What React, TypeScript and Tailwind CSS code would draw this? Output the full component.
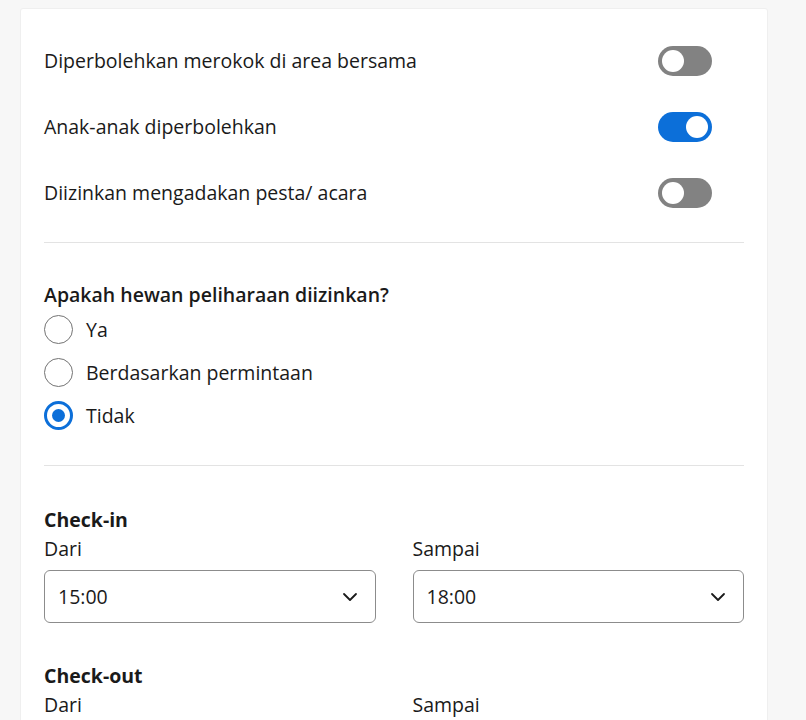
import { useState } from 'react';

function Toggle({ on, onClick }: { on: boolean; onClick: () => void }) {
  return (
    <button
      onClick={onClick}
      className={`relative w-[54px] h-[30px] rounded-full shrink-0 ${on ? 'bg-[#0c6fd9]' : 'bg-[#828282]'}`}
    >
      <span
        className={`absolute top-[4px] w-[22px] h-[22px] rounded-full bg-white ${on ? 'left-[28px]' : 'left-[4px]'}`}
      />
    </button>
  );
}

function Radio({ checked, label, onClick }: { checked: boolean; label: string; onClick: () => void }) {
  return (
    <button onClick={onClick} className="flex items-center h-[43px] gap-[13px] text-left">
      {checked ? (
        <span className="w-[29px] h-[29px] rounded-full border-[3px] border-[#0c6fd9] flex items-center justify-center">
          <span className="w-[13px] h-[13px] rounded-full bg-[#0c6fd9]" />
        </span>
      ) : (
        <span className="w-[29px] h-[29px] rounded-full border-[1.5px] border-[#737373]" />
      )}
      <span>{label}</span>
    </button>
  );
}

function TimeSelect({ value }: { value: string }) {
  return (
    <div className="flex items-center justify-between h-[53px] border border-[#8c8c8c] rounded-[6px] pl-[13px] pr-[16px]">
      <span>{value}</span>
      <svg width="18" height="18" viewBox="0 0 24 24" fill="none" stroke="#1a1a1a" strokeWidth="2.4" strokeLinecap="round" strokeLinejoin="round">
        <path d="M4 8l8 8 8-8" />
      </svg>
    </div>
  );
}

export default function App() {
  const [rules, setRules] = useState([false, true, false]);
  const [pet, setPet] = useState(2);

  const ruleLabels = [
    'Diperbolehkan merokok di area bersama',
    'Anak-anak diperbolehkan',
    'Diizinkan mengadakan pesta/ acara',
  ];
  const petLabels = ['Ya', 'Berdasarkan permintaan', 'Tidak'];

  return (
    <div className="min-h-screen bg-[#f7f7f7] pt-[8px] text-[#1a1a1a] text-[19.5px] leading-[26px] font-['Open_Sans',sans-serif]">
      <div className="ml-[20px] w-[748px] bg-white border border-[#efefef] rounded-[3px] px-[23px] pt-[19px] pb-[20px]">
        <div className="flex flex-col">
          {ruleLabels.map((l, i) => (
            <div key={l} className="flex items-center justify-between h-[66px] pr-[32px]">
              <span>{l}</span>
              <Toggle on={rules[i]} onClick={() => setRules((r) => r.map((v, j) => (j === i ? !v : v)))} />
            </div>
          ))}
        </div>
        <div className="mt-[16px] border-t border-[#e3e3e3]" />

        <div className="pt-[39px]">
          <p className="font-semibold">Apakah hewan peliharaan diizinkan?</p>
          <div className="flex flex-col">
            {petLabels.map((l, i) => (
              <Radio key={l} label={l} checked={pet === i} onClick={() => setPet(i)} />
            ))}
          </div>
        </div>
        <div className="mt-[28px] border-t border-[#e3e3e3]" />

        <div className="pt-[41px]">
          <p className="font-bold">Check-in</p>
          <div className="grid grid-cols-2 gap-[37px] mt-[3px]">
            <div>
              <p className="mb-[8px]">Dari</p>
              <TimeSelect value="15:00" />
            </div>
            <div>
              <p className="mb-[8px]">Sampai</p>
              <TimeSelect value="18:00" />
            </div>
          </div>
        </div>

        <div className="pt-[40px]">
          <p className="font-bold">Check-out</p>
          <div className="grid grid-cols-2 gap-[37px] mt-[3px]">
            <div>
              <p className="mb-[8px]">Dari</p>
              <TimeSelect value="11:00" />
            </div>
            <div>
              <p className="mb-[8px]">Sampai</p>
              <TimeSelect value="12:00" />
            </div>
          </div>
        </div>
      </div>
    </div>
  );
}
